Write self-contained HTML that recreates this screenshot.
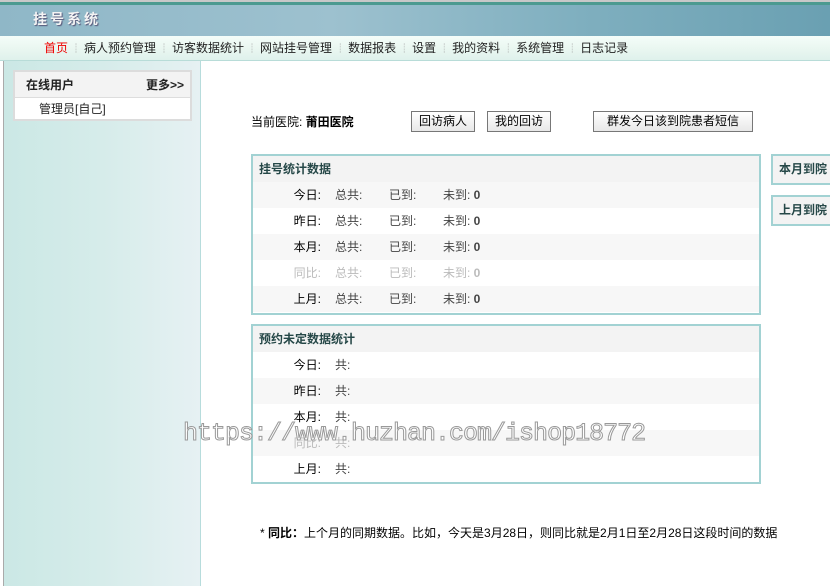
<!DOCTYPE html>
<html><head><meta charset="utf-8"><style>
*{margin:0;padding:0;box-sizing:border-box}
body{width:830px;height:586px;overflow:hidden;background:#fff;font-family:"Liberation Sans","Noto Sans CJK SC",sans-serif;font-size:12px;color:#000;position:relative}
.abs{position:absolute}
#top{left:0;top:0;width:830px;height:36px;border-top:2px solid #c8c8c8;background:linear-gradient(90deg,#8fb7c7,#9dc1cf 40%,#7fafbf 70%,#6aa0b2);}
#top:before{content:"";position:absolute;left:0;top:0;right:0;height:3px;background:#4c9a90}
#logo{left:33px;top:9px;color:#f4f4f4;font-weight:bold;font-size:14px;letter-spacing:3px;text-shadow:1px 1px 1px #557}
#nav{left:0;top:36px;width:830px;height:25px;background:linear-gradient(#f4fdf9,#eaf7f1 50%,#dff1ec);border-bottom:1px solid #b8dcd8;font-size:12px;color:#222;padding-left:44px;line-height:25px;white-space:nowrap}
#nav span.s{color:#999;margin:0 3px 0 3px;font-size:10px}
#side{left:3px;top:61px;width:198px;height:525px;border-left:1px solid #aaa;border-right:1px solid #b7dcdc;background:linear-gradient(90deg,#cbe8e5,#d6ecea 50%,#e6f1f3)}
#ubox{left:13px;top:70px;width:179px;height:51px;border:2px solid #dcdcdc;background:#fff}
#ubox .h{height:26px;background:#f3f3f3;border-bottom:1px solid #ddd;font-weight:bold;font-size:12px;line-height:26px;padding:0 6px 0 11px;display:flex;justify-content:space-between;color:#222}
#ubox .b{padding-left:24px;line-height:22px;font-size:12px;color:#222}
.btn{position:absolute;top:111px;height:21px;border:1px solid #777;background:linear-gradient(#fff,#e8e8e8);font-size:12px;line-height:19px;text-align:center;color:#000}
.box{position:absolute;left:251px;width:510px;border:2px solid #a2d2d3;background:#fff}
.box .h{height:26px;background:#f3f3f3;font-weight:bold;color:#264848;padding-left:6px;line-height:26px;font-size:12px}
.row{height:26px;line-height:26px;position:relative;color:#444}
.row.g{background:#f7f7f7}
.row .l{position:absolute;left:0;width:68px;text-align:right;color:#000;background:#fff;height:26px}
.row.g .l{background:#f7f7f7}
.row .c{position:absolute}
.row.dim,.row.dim .l{color:#bbb}
.rb{position:absolute;left:771px;width:70px;height:31px;border:2px solid #a2d2d3;background:#f3f3f3;font-weight:bold;color:#264848;line-height:27px;padding-left:6px;white-space:nowrap;overflow:hidden}
#wm{left:183px;top:419px;font-family:"Liberation Mono",monospace;font-size:25px;color:#fff;-webkit-text-stroke:1px #999;letter-spacing:-1px;white-space:nowrap}
</style></head><body>
<div id="top" class="abs"></div>
<div id="logo" class="abs">挂号系统</div>
<div id="nav" class="abs"><span style="color:#e00">首页</span><span class="s">┊</span>病人预约管理<span class="s">┊</span>访客数据统计<span class="s">┊</span>网站挂号管理<span class="s">┊</span>数据报表<span class="s">┊</span>设置<span class="s">┊</span>我的资料<span class="s">┊</span>系统管理<span class="s">┊</span>日志记录</div>
<div id="side" class="abs"></div>
<div id="ubox" class="abs"><div class="h"><span>在线用户</span><span>更多&gt;&gt;</span></div><div class="b">管理员[自己]</div></div>
<div class="abs" style="left:251px;top:114px;line-height:16px">当前医院: <b>莆田医院</b></div>
<div class="btn" style="left:411px;width:64px">回访病人</div>
<div class="btn" style="left:487px;width:64px">我的回访</div>
<div class="btn" style="left:593px;width:160px">群发今日该到院患者短信</div>

<div class="box" style="top:154px;height:161px">
<div class="h">挂号统计数据</div>
<div class="row g"><span class="l">今日:</span><span class="c" style="left:82px">总共:</span><span class="c" style="left:136px">已到:</span><span class="c" style="left:190px">未到: <b>0</b></span></div>
<div class="row"><span class="l">昨日:</span><span class="c" style="left:82px">总共:</span><span class="c" style="left:136px">已到:</span><span class="c" style="left:190px">未到: <b>0</b></span></div>
<div class="row g"><span class="l">本月:</span><span class="c" style="left:82px">总共:</span><span class="c" style="left:136px">已到:</span><span class="c" style="left:190px">未到: <b>0</b></span></div>
<div class="row dim"><span class="l">同比:</span><span class="c" style="left:82px">总共:</span><span class="c" style="left:136px">已到:</span><span class="c" style="left:190px">未到: <b>0</b></span></div>
<div class="row g"><span class="l">上月:</span><span class="c" style="left:82px">总共:</span><span class="c" style="left:136px">已到:</span><span class="c" style="left:190px">未到: <b>0</b></span></div>
</div>

<div class="box" style="top:324px;height:160px">
<div class="h">预约未定数据统计</div>
<div class="row"><span class="l">今日:</span><span class="c" style="left:82px">共:</span></div>
<div class="row g"><span class="l">昨日:</span><span class="c" style="left:82px">共:</span></div>
<div class="row"><span class="l">本月:</span><span class="c" style="left:82px">共:</span></div>
<div class="row g dim"><span class="l">同比:</span><span class="c" style="left:82px">共:</span></div>
<div class="row"><span class="l">上月:</span><span class="c" style="left:82px">共:</span></div>
</div>

<div class="rb" style="top:154px">本月到院</div>
<div class="rb" style="top:195px">上月到院</div>

<div class="abs" style="left:260px;top:525px;line-height:16px">* <b>同比：</b>上个月的同期数据。比如，今天是3月28日，则同比就是2月1日至2月28日这段时间的数据</div>
<div id="wm" class="abs">https://www.huzhan.com/ishop18772</div>
</body></html>
